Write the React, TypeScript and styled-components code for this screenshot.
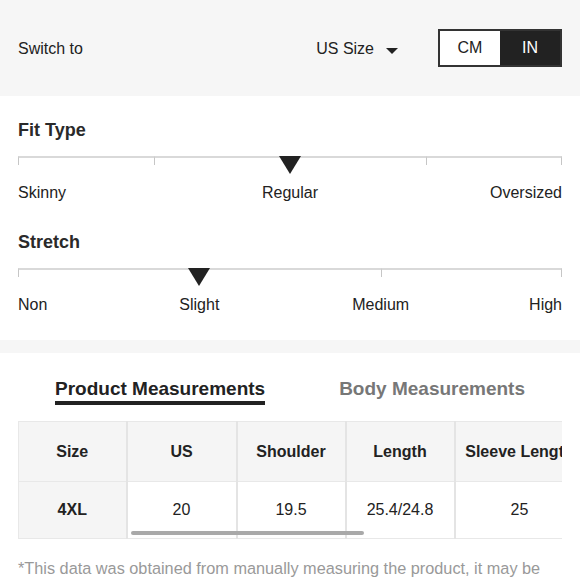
import React from "react";
import styled, { createGlobalStyle } from "styled-components";

const GlobalStyle = createGlobalStyle`
  html, body {
    margin: 0;
    padding: 0;
    background: #ffffff;
    font-family: "Liberation Sans", Arial, Helvetica, sans-serif;
    color: #222;
    overflow: hidden;
  }
  * { box-sizing: border-box; }
`;

interface ScaleDef {
  title: string;
  segments: number[];
  marker: number;
  columns: number;
  labels: { text: string; from: number; to: number; align: "start" | "center" | "end" }[];
}

const scales: ScaleDef[] = [
  {
    title: "Fit Type",
    segments: [25, 50, 25],
    marker: 50,
    columns: 4,
    labels: [
      { text: "Skinny", from: 1, to: 2, align: "start" },
      { text: "Regular", from: 2, to: 4, align: "center" },
      { text: "Oversized", from: 4, to: 5, align: "end" },
    ],
  },
  {
    title: "Stretch",
    segments: [66.667, 33.333],
    marker: 33.333,
    columns: 6,
    labels: [
      { text: "Non", from: 1, to: 2, align: "start" },
      { text: "Slight", from: 2, to: 4, align: "center" },
      { text: "Medium", from: 4, to: 6, align: "center" },
      { text: "High", from: 6, to: 7, align: "end" },
    ],
  },
];

const headers = ["Size", "US", "Shoulder", "Length", "Sleeve Length"];
const row = ["4XL", "20", "19.5", "25.4/24.8", "25"];
const colWidths = [108, 110, 109, 109, 130];

const App = () => {
  return (
    <Page>
      <GlobalStyle />
      <TopBar>
        <SwitchLabel>Switch to</SwitchLabel>
        <SizePicker>
          US Size
          <Caret />
        </SizePicker>
        <UnitToggle>
          <UnitOption>CM</UnitOption>
          <UnitOption active>IN</UnitOption>
        </UnitToggle>
      </TopBar>

      <FitSection>
        {scales.map((s) => (
          <ScaleBlock key={s.title}>
            <ScaleTitle>{s.title}</ScaleTitle>
            <Track>
              {s.segments.map((w, i) => (
                <Segment key={i} style={{ width: `${w}%` }} last={i === s.segments.length - 1} />
              ))}
              <Marker style={{ left: `${s.marker}%` }} />
            </Track>
            <LabelRow cols={s.columns}>
              {s.labels.map((l) => (
                <ScaleLabel key={l.text} from={l.from} to={l.to} align={l.align}>
                  {l.text}
                </ScaleLabel>
              ))}
            </LabelRow>
          </ScaleBlock>
        ))}
      </FitSection>

      <Divider />

      <MeasureSection>
        <Tabs>
          <Tab active>Product Measurements</Tab>
          <Tab>Body Measurements</Tab>
        </Tabs>
        <TableWrap>
          <SizeTable>
            <colgroup>
              {colWidths.map((w, i) => (
                <col key={i} style={{ width: w }} />
              ))}
            </colgroup>
            <thead>
              <tr>
                {headers.map((h) => (
                  <HeadCell key={h}>{h}</HeadCell>
                ))}
              </tr>
            </thead>
            <tbody>
              <tr>
                {row.map((v, i) => (
                  <BodyCell key={i} first={i === 0}>
                    {v}
                  </BodyCell>
                ))}
              </tr>
            </tbody>
          </SizeTable>
          <ScrollThumb />
        </TableWrap>
        <Note>
          *This data was obtained from manually measuring the product, it may be off by 1-2 CM.
        </Note>
      </MeasureSection>
    </Page>
  );
};

const Page = styled.div`
  width: 580px;
  height: 580px;
  overflow: hidden;
  background: #fff;
`;

const TopBar = styled.div`
  height: 96px;
  background: #f6f6f6;
  display: flex;
  align-items: center;
  padding: 1px 18px 0 18px;
`;

const SwitchLabel = styled.div`
  font-size: 16px;
  color: #222;
`;

const SizePicker = styled.div`
  margin-left: auto;
  display: flex;
  align-items: center;
  gap: 12px;
  font-size: 16px;
  color: #222;
  margin-right: 40px;
`;

const Caret = styled.span`
  width: 0;
  height: 0;
  margin-top: 5px;
  border-left: 6px solid transparent;
  border-right: 6px solid transparent;
  border-top: 6px solid #222;
`;

const UnitToggle = styled.div`
  display: flex;
  width: 124px;
  height: 38px;
  border: 2px solid #333;
  margin-top: -1px;
`;

const UnitOption = styled.div<{ active?: boolean }>`
  flex: 1;
  display: flex;
  align-items: center;
  justify-content: center;
  font-size: 16px;
  background: ${(p) => (p.active ? "#222" : "#fff")};
  color: ${(p) => (p.active ? "#fff" : "#222")};
`;

const FitSection = styled.div`
  padding: 23px 18px 25px;
  display: flex;
  flex-direction: column;
  gap: 28px;
`;

const ScaleBlock = styled.div`
  display: flex;
  flex-direction: column;
`;

const ScaleTitle = styled.div`
  font-size: 18px;
  font-weight: bold;
  line-height: 22px;
  color: #2a2a2a;
`;

const Track = styled.div`
  position: relative;
  display: flex;
  margin-top: 15px;
  height: 9px;
`;

const Segment = styled.div<{ last?: boolean }>`
  border-top: 2px solid #d9d9d9;
  border-left: 1px solid #c6c6c6;
  ${(p) => p.last && `border-right: 1px solid #c6c6c6;`}
`;

const Marker = styled.div`
  position: absolute;
  top: 0;
  width: 0;
  height: 0;
  transform: translateX(-50%);
  border-left: 11.5px solid transparent;
  border-right: 11.5px solid transparent;
  border-top: 18px solid #222;
`;

const LabelRow = styled.div<{ cols: number }>`
  display: grid;
  grid-template-columns: repeat(${(p) => p.cols}, 1fr);
  margin-top: 18px;
`;

const ScaleLabel = styled.div<{ from: number; to: number; align: string }>`
  grid-column: ${(p) => p.from} / ${(p) => p.to};
  justify-self: ${(p) => p.align};
  font-size: 16px;
  line-height: 20px;
  color: #222;
  white-space: nowrap;
`;

const Divider = styled.div`
  height: 13px;
  background: #f6f6f6;
`;

const MeasureSection = styled.div`
  padding: 25px 18px 0;
`;

const Tabs = styled.div`
  display: flex;
  justify-content: center;
  gap: 74px;
`;

const Tab = styled.div<{ active?: boolean }>`
  font-size: 19px;
  font-weight: bold;
  line-height: 22px;
  padding-bottom: 1px;
  color: ${(p) => (p.active ? "#222" : "#777")};
  border-bottom: 4px solid ${(p) => (p.active ? "#222" : "transparent")};
`;

const TableWrap = styled.div`
  position: relative;
  margin-top: 16px;
  width: 544px;
  overflow: hidden;
`;

const SizeTable = styled.table`
  table-layout: fixed;
  border-collapse: collapse;
  width: 566px;
`;

const HeadCell = styled.th`
  height: 60px;
  background: #f5f5f5;
  font-size: 16px;
  font-weight: bold;
  color: #222;
  text-align: center;
  white-space: nowrap;
  overflow: hidden;
  border: 1px solid #e8e8e8;
  border-right: 2px solid #e4e4e4;
  padding: 0 4px;
`;

const BodyCell = styled.td<{ first?: boolean }>`
  height: 57px;
  background: ${(p) => (p.first ? "#f5f5f5" : "#fff")};
  font-size: 16px;
  font-weight: ${(p) => (p.first ? "bold" : "normal")};
  color: #222;
  text-align: center;
  border: 1px solid #e8e8e8;
  border-right: 2px solid #e4e4e4;
`;

const ScrollThumb = styled.div`
  position: absolute;
  left: 113px;
  bottom: 4px;
  width: 233px;
  height: 4px;
  border-radius: 2px;
  background: #a9a9a9;
`;

const Note = styled.div`
  margin-top: 18px;
  padding-right: 16px;
  font-size: 16.3px;
  line-height: 22px;
  color: #999;
`;

export default App;
